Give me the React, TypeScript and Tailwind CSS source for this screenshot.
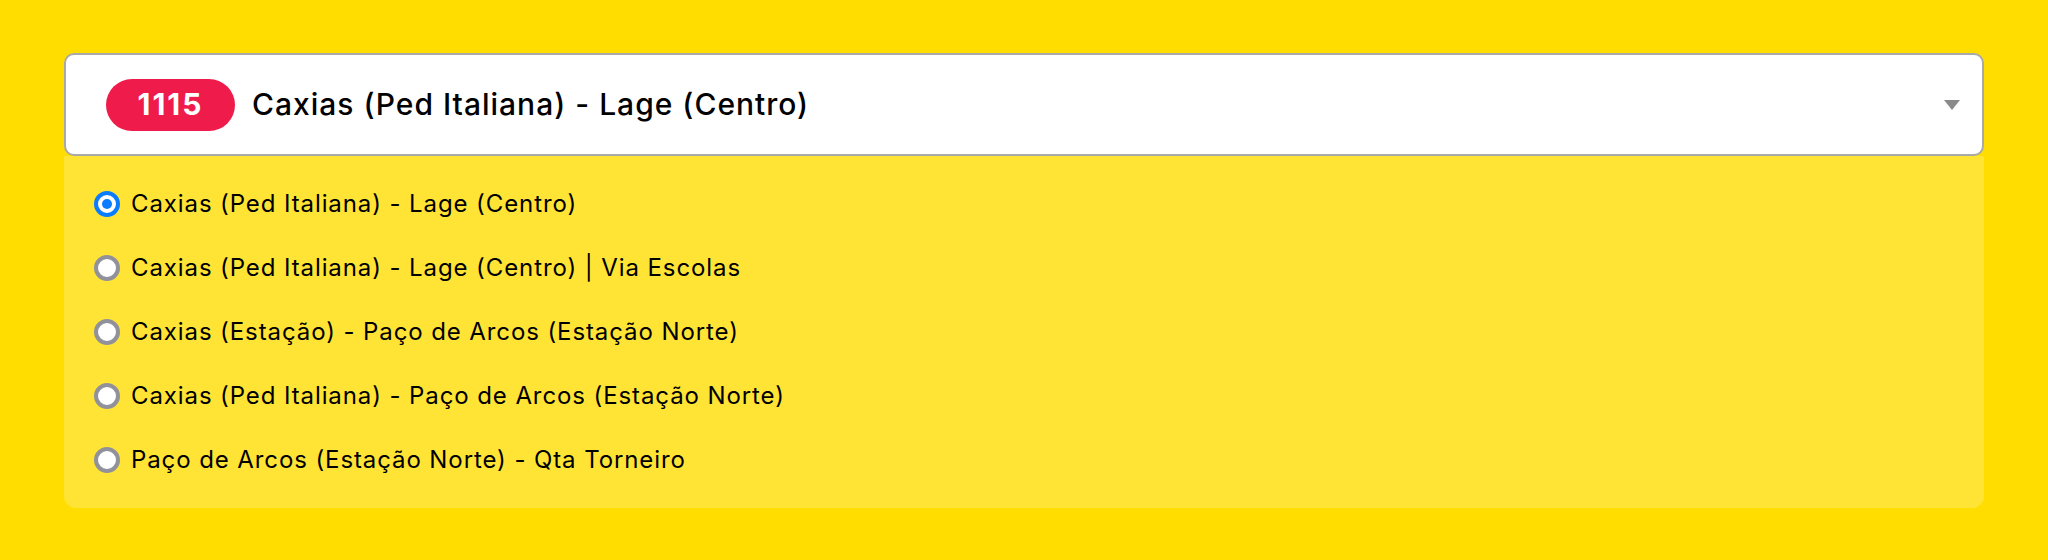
const options = [
  "Caxias (Ped Italiana) - Lage (Centro)",
  "Caxias (Ped Italiana) - Lage (Centro) | Via Escolas",
  "Caxias (Estação) - Paço de Arcos (Estação Norte)",
  "Caxias (Ped Italiana) - Paço de Arcos (Estação Norte)",
  "Paço de Arcos (Estação Norte) - Qta Torneiro",
];

function Radio({ checked }: { checked: boolean }) {
  if (checked) {
    return (
      <span className="flex h-[26px] w-[26px] shrink-0 items-center justify-center rounded-full border-[4px] border-[#0a7cff] bg-white">
        <span className="h-[10px] w-[10px] rounded-full bg-[#0a7cff]" />
      </span>
    );
  }
  return <span className="h-[26px] w-[26px] shrink-0 rounded-full border-[4px] border-[#91919b] bg-white" />;
}

export default function App() {
  const selected = 0;
  return (
    <div
      className="min-h-[560px] w-full bg-[#ffdd00] px-16 pt-[53px]"
      style={{ fontFamily: "Inter, 'Noto Sans', sans-serif" }}
    >
      <div className="flex h-[103px] items-center rounded-[10px] border-2 border-[#a9a9a9] bg-white pl-[40px] pr-[22px]">
        <span className="flex h-[52px] w-[129px] items-center justify-center rounded-full bg-[#ef1b4a] text-[30px] font-bold tracking-[2px] text-white">
          1115
        </span>
        <span className="ml-[17px] text-[30px] font-medium tracking-[1px] text-black">
          Caxias (Ped Italiana) - Lage (Centro)
        </span>
        <svg className="ml-auto" width="16" height="10" viewBox="0 0 16 10">
          <path d="M0 0 H16 L8 10 Z" fill="#8a8a8a" />
        </svg>
      </div>
      <div className="rounded-b-[12px] bg-[#ffe435] py-4 pl-[30px]">
        {options.map((label, i) => (
          <label key={label} className="flex h-16 items-center gap-[11px] text-[24px] tracking-[0.9px] text-black">
            <Radio checked={i === selected} />
            <span>{label}</span>
          </label>
        ))}
      </div>
    </div>
  );
}
